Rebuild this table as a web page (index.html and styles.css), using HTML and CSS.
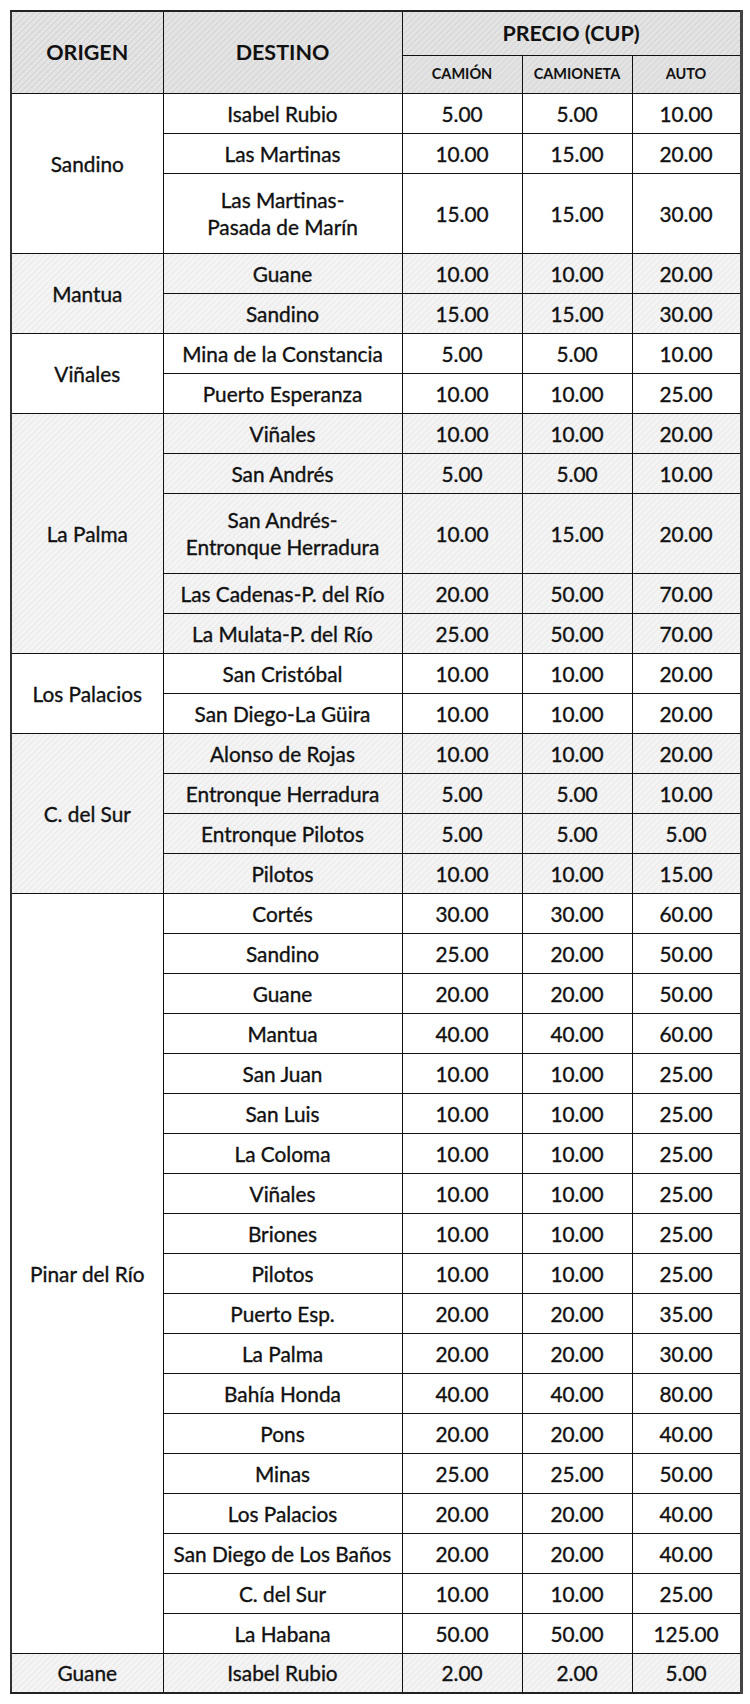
FILE: index.html
```html
<!DOCTYPE html>
<html lang="es">
<head>
<meta charset="utf-8">
<title>Precios</title>
<link rel="stylesheet" href="styles.css">
</head>
<body>
<table class="tarifas">
  <colgroup>
    <col class="c-origen"><col class="c-destino"><col class="c-camion"><col class="c-camioneta"><col class="c-auto">
  </colgroup>
  <thead>
    <tr class="h1">
      <th rowspan="2">ORIGEN</th>
      <th rowspan="2">DESTINO</th>
      <th colspan="3">PRECIO (CUP)</th>
    </tr>
    <tr class="h2">
      <th class="sub">CAMIÓN</th>
      <th class="sub">CAMIONETA</th>
      <th class="sub">AUTO</th>
    </tr>
  </thead>
  <tbody>
    <tr><td rowspan="3" class="raise">Sandino</td><td>Isabel Rubio</td><td>5.00</td><td>5.00</td><td>10.00</td></tr>
    <tr><td>Las Martinas</td><td>10.00</td><td>15.00</td><td>20.00</td></tr>
    <tr class="double"><td>Las Martinas-<br>Pasada de Marín</td><td>15.00</td><td>15.00</td><td>30.00</td></tr>
  </tbody>
  <tbody class="shade">
    <tr><td rowspan="2">Mantua</td><td>Guane</td><td>10.00</td><td>10.00</td><td>20.00</td></tr>
    <tr><td>Sandino</td><td>15.00</td><td>15.00</td><td>30.00</td></tr>
  </tbody>
  <tbody>
    <tr><td rowspan="2">Viñales</td><td>Mina de la Constancia</td><td>5.00</td><td>5.00</td><td>10.00</td></tr>
    <tr><td>Puerto Esperanza</td><td>10.00</td><td>10.00</td><td>25.00</td></tr>
  </tbody>
  <tbody class="shade">
    <tr><td rowspan="5">La Palma</td><td>Viñales</td><td>10.00</td><td>10.00</td><td>20.00</td></tr>
    <tr><td>San Andrés</td><td>5.00</td><td>5.00</td><td>10.00</td></tr>
    <tr class="double"><td>San Andrés-<br>Entronque Herradura</td><td>10.00</td><td>15.00</td><td>20.00</td></tr>
    <tr><td>Las Cadenas-P. del Río</td><td>20.00</td><td>50.00</td><td>70.00</td></tr>
    <tr><td>La Mulata-P. del Río</td><td>25.00</td><td>50.00</td><td>70.00</td></tr>
  </tbody>
  <tbody>
    <tr><td rowspan="2">Los Palacios</td><td>San Cristóbal</td><td>10.00</td><td>10.00</td><td>20.00</td></tr>
    <tr><td>San Diego-La Güira</td><td>10.00</td><td>10.00</td><td>20.00</td></tr>
  </tbody>
  <tbody class="shade">
    <tr><td rowspan="4">C. del Sur</td><td>Alonso de Rojas</td><td>10.00</td><td>10.00</td><td>20.00</td></tr>
    <tr><td>Entronque Herradura</td><td>5.00</td><td>5.00</td><td>10.00</td></tr>
    <tr><td>Entronque Pilotos</td><td>5.00</td><td>5.00</td><td>5.00</td></tr>
    <tr><td>Pilotos</td><td>10.00</td><td>10.00</td><td>15.00</td></tr>
  </tbody>
  <tbody>
    <tr><td rowspan="19">Pinar del Río</td><td>Cortés</td><td>30.00</td><td>30.00</td><td>60.00</td></tr>
    <tr><td>Sandino</td><td>25.00</td><td>20.00</td><td>50.00</td></tr>
    <tr><td>Guane</td><td>20.00</td><td>20.00</td><td>50.00</td></tr>
    <tr><td>Mantua</td><td>40.00</td><td>40.00</td><td>60.00</td></tr>
    <tr><td>San Juan</td><td>10.00</td><td>10.00</td><td>25.00</td></tr>
    <tr><td>San Luis</td><td>10.00</td><td>10.00</td><td>25.00</td></tr>
    <tr><td>La Coloma</td><td>10.00</td><td>10.00</td><td>25.00</td></tr>
    <tr><td>Viñales</td><td>10.00</td><td>10.00</td><td>25.00</td></tr>
    <tr><td>Briones</td><td>10.00</td><td>10.00</td><td>25.00</td></tr>
    <tr><td>Pilotos</td><td>10.00</td><td>10.00</td><td>25.00</td></tr>
    <tr><td>Puerto Esp.</td><td>20.00</td><td>20.00</td><td>35.00</td></tr>
    <tr><td>La Palma</td><td>20.00</td><td>20.00</td><td>30.00</td></tr>
    <tr><td>Bahía Honda</td><td>40.00</td><td>40.00</td><td>80.00</td></tr>
    <tr><td>Pons</td><td>20.00</td><td>20.00</td><td>40.00</td></tr>
    <tr><td>Minas</td><td>25.00</td><td>25.00</td><td>50.00</td></tr>
    <tr><td>Los Palacios</td><td>20.00</td><td>20.00</td><td>40.00</td></tr>
    <tr><td>San Diego de Los Baños</td><td>20.00</td><td>20.00</td><td>40.00</td></tr>
    <tr><td>C. del Sur</td><td>10.00</td><td>10.00</td><td>25.00</td></tr>
    <tr><td>La Habana</td><td>50.00</td><td>50.00</td><td>125.00</td></tr>
  </tbody>
  <tbody class="shade">
    <tr><td>Guane</td><td>Isabel Rubio</td><td>2.00</td><td>2.00</td><td>5.00</td></tr>
  </tbody>
</table>
</body>
</html>
```
FILE: styles.css
```css
html, body {
  margin: 0;
  padding: 0;
  background: #ffffff;
}

body {
  padding: 10px 10px;
  font-family: Lato, "Open Sans", "Liberation Sans", sans-serif;
  color: #111111;
}

.tarifas {
  border-collapse: collapse;
  table-layout: fixed;
  width: 730px;
  border-top: 2px solid #222;
  border-left: 2px solid #333;
  border-right: 3px solid #444;
  border-bottom: 2px solid #222;
}

.c-origen { width: 152px; }
.c-destino { width: 239px; }
.c-camion { width: 120px; }
.c-camioneta { width: 110px; }
.c-auto { width: 109px; }

.tarifas th,
.tarifas td {
  border: 1px solid #111;
  padding: 0 2px;
  text-align: center;
  vertical-align: middle;
}

.tarifas thead th {
  background: repeating-linear-gradient(135deg, #e3e3e3 0, #e3e3e3 3px, #cfcfcf 3px, #cfcfcf 4.24px);
  font-weight: 700;
  font-size: 21.5px;
  line-height: 22px;
}

.tarifas thead th.sub {
  font-size: 14.5px;
}

.tarifas .h1 { height: 44px; }
.tarifas .h2 { height: 38px; }

.tarifas td {
  font-size: 20.8px;
  font-weight: 400;
  -webkit-text-stroke: 0.35px #111;
  line-height: 27px;
  padding-top: 0;
}

.tarifas td.raise {
  padding-bottom: 20px;
}

.tarifas tbody tr { height: 40px; }
.tarifas tbody tr.double { height: 80px; }

.tarifas tbody.shade td {
  background: repeating-linear-gradient(135deg, #f4f4f4 0, #f4f4f4 3px, #e4e4e4 3px, #e4e4e4 4.24px);
}
```
